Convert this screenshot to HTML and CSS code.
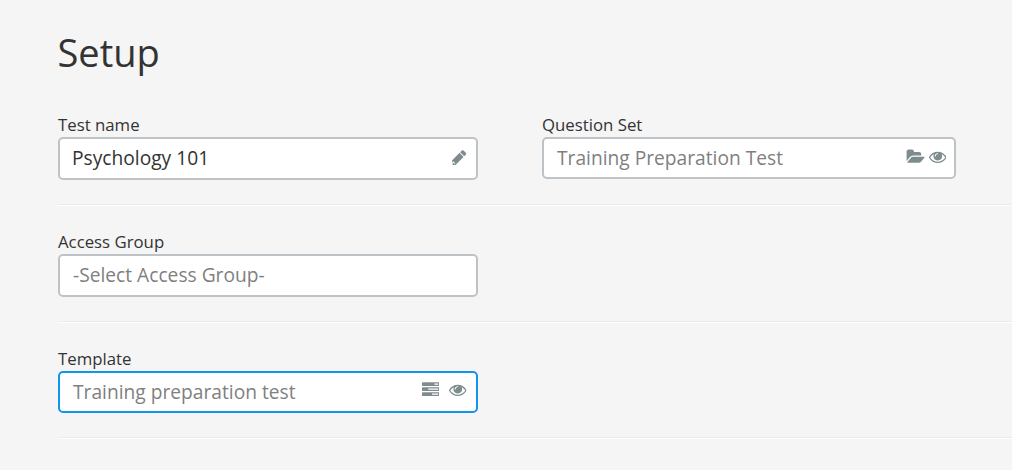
FILE: index.html
```html
<!DOCTYPE html>
<html lang="en">
<head>
    <meta charset="UTF-8">
    <meta name="viewport" content="width=device-width, initial-scale=1.0">
    <title>Setup</title>
    <link rel="stylesheet" href="styles.css">
</head>
<body>
    <svg class="sprite" xmlns="http://www.w3.org/2000/svg">
        <symbol id="icon-eye" viewBox="0 0 1792 1792">
            <path d="M1664 960q-152-236-381-353 61 104 61 225 0 185-131.5 316.5t-316.5 131.5-316.5-131.5-131.5-316.5q0-121 61-225-229 117-381 353 133 205 333.5 326.5t434.5 121.5 434.5-121.5 333.5-326.5zm-720-384q0-20-14-34t-34-14q-125 0-214.5 89.5t-89.5 214.5q0 20 14 34t34 14 34-14 14-34q0-86 61-147t147-61q20 0 34-14t14-34zm848 384q0 34-20 69-140 230-376.5 368.5t-499.5 138.5-499.5-139-376.5-368q-20-35-20-69t20-69q140-229 376.5-368t499.5-139 499.5 139 376.5 368q20 35 20 69z"/>
        </symbol>
    </svg>

    <main class="setup">
        <h1>Setup</h1>

        <div class="row">
            <div class="field">
                <label for="test-name">Test name</label>
                <div class="input-box">
                    <input class="filled" type="text" id="test-name" value="Psychology 101">
                    <svg class="icon icon-pencil" viewBox="256 128 1408 1536"><path d="M450 1550l70-70-235-235-29 60v359h130zM960 416l416 416-832 832h-160l60-100-200-200-100 50v-166zm683 96q0 53-37 90l-166 166-416-416 166-165q36-38 90-38 53 0 91 38l235 234q37 39 37 91z"/></svg>
                </div>
            </div>
            <div class="field field-right">
                <label for="question-set">Question Set</label>
                <div class="input-box short">
                    <input type="text" id="question-set" placeholder="Training Preparation Test">
                    <svg class="icon icon-folder" viewBox="0 0 1944 1792"><path d="M1943 952q0 31-31 66l-336 396q-43 51-120.5 86.5t-143.5 35.5h-1088q-34 0-60.5-13t-26.5-43q0-31 31-66l336-396q43-51 120.5-86.5t143.5-35.5h1088q34 0 60.5 13t26.5 43zm-343-344v160h-832q-94 0-197 47.5t-164 119.5l-337 396-5 6q0-4-.5-12.5t-.5-12.5v-960q0-92 66-158t158-66h320q92 0 158 66t66 158v32h544q92 0 158 66t66 158z"/></svg>
                    <svg class="icon"><use href="#icon-eye"/></svg>
                </div>
            </div>
        </div>

        <div class="row">
            <div class="field">
                <label for="access-group">Access Group</label>
                <div class="input-box">
                    <input type="text" id="access-group" placeholder="-Select Access Group-">
                </div>
            </div>
        </div>

        <div class="row row-last">
            <div class="field">
                <label for="template">Template</label>
                <div class="input-box short active">
                    <input type="text" id="template" placeholder="Training preparation test">
                    <svg class="icon icon-tasks" viewBox="0 0 1792 1792"><path d="M1024 1408h640v-128h-640v128zm-384-512h1024v-128h-1024v128zm640-512h384v-128h-384v128zm512 832v256q0 26-19 45t-45 19h-1664q-26 0-45-19t-19-45v-256q0-26 19-45t45-19h1664q26 0 45 19t19 45zm0-512v256q0 26-19 45t-45 19h-1664q-26 0-45-19t-19-45v-256q0-26 19-45t45-19h1664q26 0 45 19t19 45zm0-512v256q0 26-19 45t-45 19h-1664q-26 0-45-19t-19-45v-256q0-26 19-45t45-19h1664q26 0 45 19t19 45z"/></svg>
                    <svg class="icon"><use href="#icon-eye"/></svg>
                </div>
            </div>
        </div>
    </main>
</body>
</html>
```
FILE: styles.css
```css
* {
    box-sizing: border-box;
}

body {
    margin: 0;
    background-color: #f5f5f5;
    color: #333;
    font-family: "Open Sans", sans-serif;
}

.sprite {
    display: none;
}

.setup {
    padding: 25px 0 0 58px;
}

h1 {
    margin: 0 0 34px -0.5px;
    font-size: 38px;
    font-weight: 400;
    line-height: 54px;
}

.row {
    display: flex;
    gap: 64px;
    height: 92px;
    margin-bottom: 25px;
    border-bottom: 1px solid #ebebeb;
    box-shadow: 0 1px 0 #fff;
}

.row-last {
    height: 91px;
}

.field {
    width: 420px;
}

.field-right {
    width: 414px;
}

label {
    display: block;
    margin-bottom: 1px;
    font-size: 16.8px;
    line-height: 23px;
}

.input-box {
    display: flex;
    align-items: center;
    height: 43px;
    padding: 0 9px 1px 13px;
    background-color: #fff;
    border: 2px solid #bdc3c7;
    border-radius: 5px;
}

.input-box.short {
    height: 42px;
    padding-right: 8px;
    padding-bottom: 0;
}

.input-box.active {
    padding-right: 9.5px;
    border-color: #1296ec;
}

input {
    flex: 1;
    min-width: 0;
    margin-bottom: 2px;
    padding: 0;
    border: none;
    background: transparent;
    color: #333;
    font-family: inherit;
    font-size: 19.2px;
}

input:focus {
    outline: none;
}

input.filled {
    margin-left: -1px;
}

input::placeholder {
    color: #7f7f7f;
}

.icon {
    flex: none;
    width: 17.5px;
    height: 17.5px;
    margin-bottom: 2px;
    fill: #7f8c8d;
}

.icon-pencil {
    width: 15px;
    height: 15px;
    margin-bottom: 1px;
}

.icon-folder {
    width: 18.5px;
    margin-right: 4px;
}

.icon-tasks {
    margin-right: 10px;
}

.active .icon {
    margin-bottom: 4px;
}
```
